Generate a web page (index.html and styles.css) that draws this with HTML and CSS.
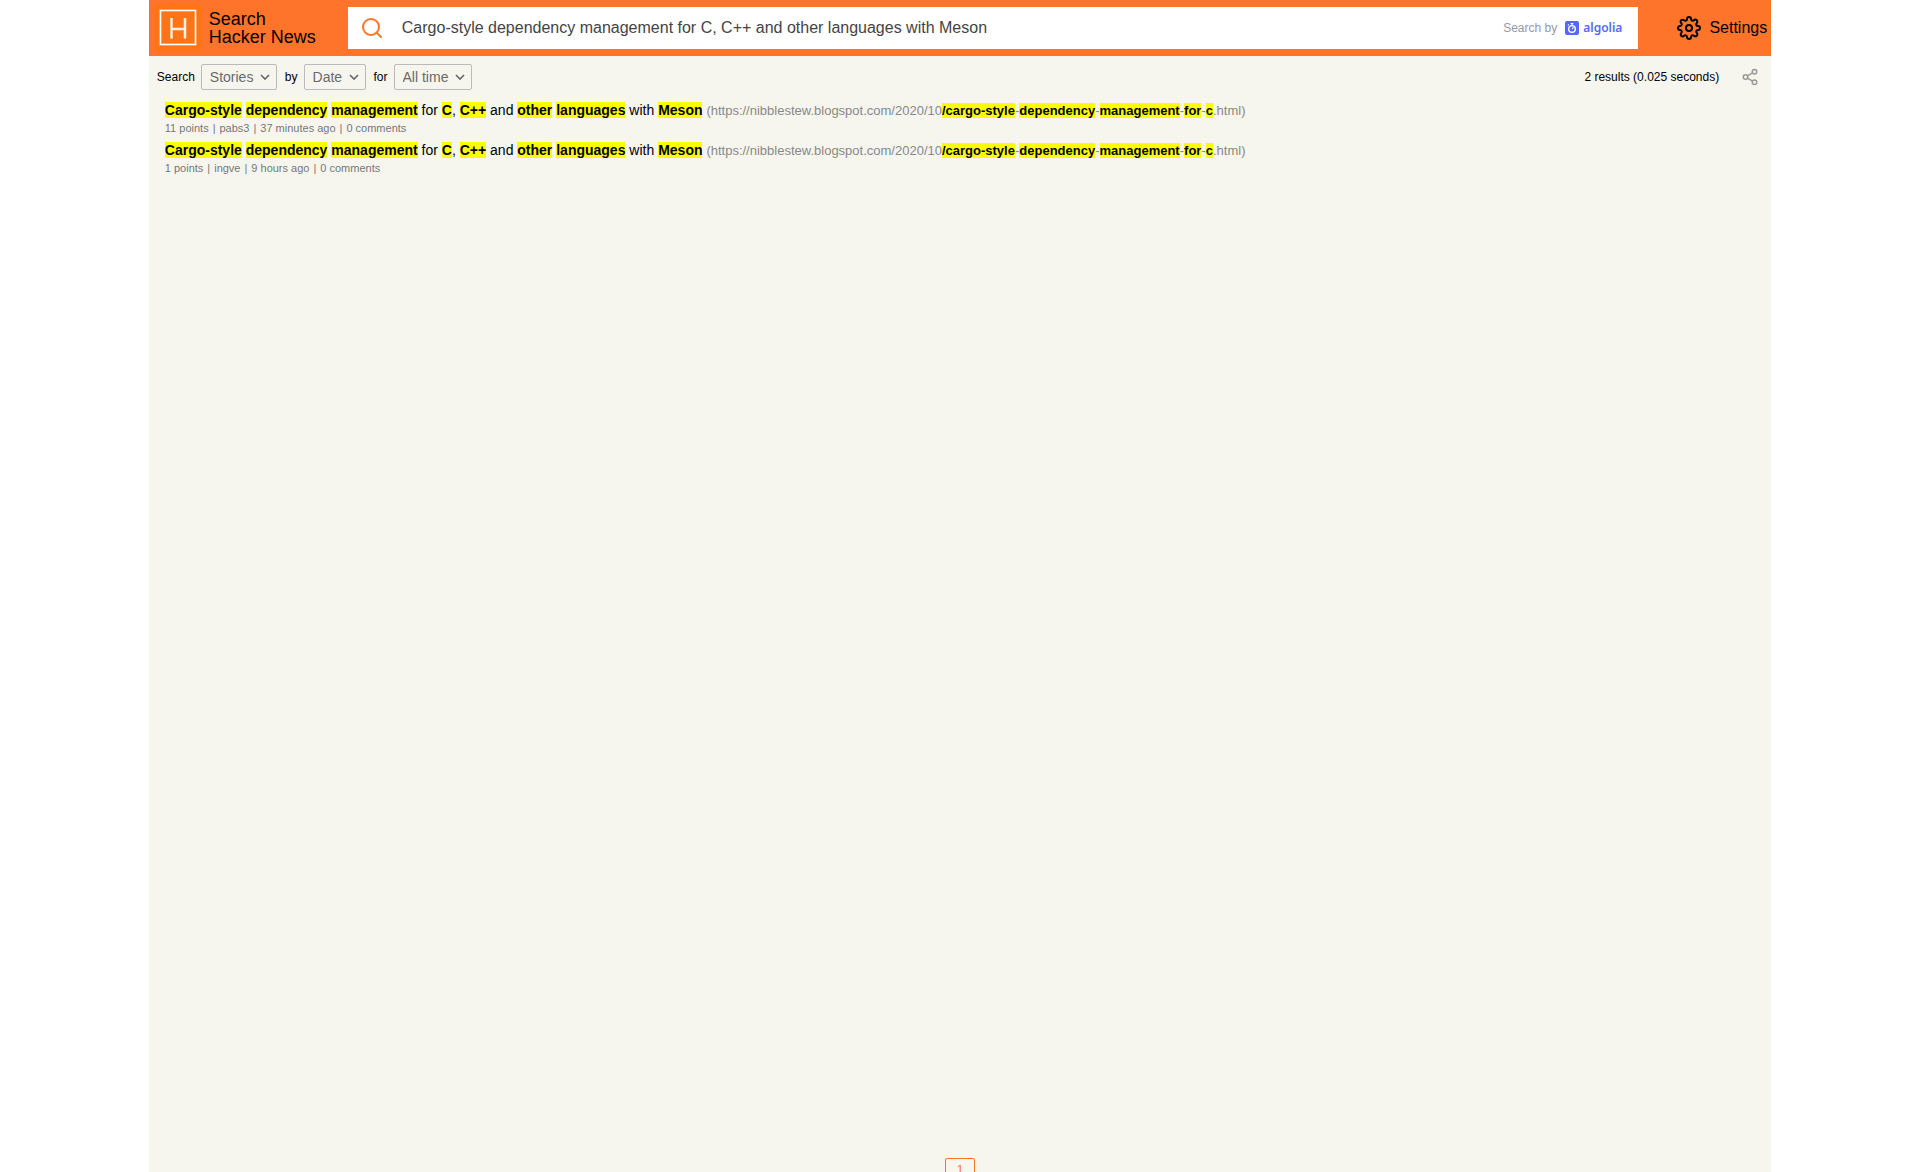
FILE: index.html
```html
<!DOCTYPE html>
<html lang="en">
<head>
<meta charset="utf-8">
<meta name="viewport" content="width=device-width, initial-scale=1">
<title>Search Hacker News</title>
<link rel="stylesheet" href="styles.css">
</head>
<body>
<div class="app">
  <header class="header">
    <a class="brand" href="#">
      <svg class="brand-logo" viewBox="0 0 48 48" aria-hidden="true">
        <rect width="48" height="48" rx="5" fill="#ff7416"/>
        <g fill="none" stroke="#ffb57c" stroke-width="2.400">
          <rect x="6.500" y="6.500" width="35" height="34"/>
          <path d="M17.500 14v20.500M31 14v20.500M17.500 25h13.500" stroke-width="3"/>
        </g>
        <g fill="none" stroke="#fff" stroke-width="1">
          <rect x="6.500" y="6.500" width="35" height="34"/>
          <path d="M17.500 14v20.500M31 14v20.500M17.500 25h13.500" stroke-width="1.600"/>
        </g>
      </svg>
      <span class="brand-name">Search<br>Hacker News</span>
    </a>
    <form class="search" role="search">
      <svg class="search-icon" viewBox="0 0 24 24" aria-hidden="true">
        <circle cx="11" cy="11" r="8"/><path d="M21 21l-4.350-4.350"/>
      </svg>
      <input class="search-input" type="search" aria-label="Search stories" value="Cargo-style dependency management for C, C++ and other languages with Meson">
      <span class="powered">Search by</span>
      <a class="algolia" href="#">
        <svg class="algolia-mark" viewBox="0 0 14 14" aria-hidden="true">
          <rect width="14" height="14" rx="2" fill="#5468ff"/>
          <circle cx="7" cy="7.900" r="3.300" fill="none" stroke="#fff" stroke-width="1.400"/>
          <path d="M5.700 2.500h2.600M7 2.500v2M3 4.300l.8-.8M7 7.900l1.500-1.500" fill="none" stroke="#fff" stroke-width="1.200"/>
        </svg>
        <span>algolia</span>
      </a>
    </form>
    <a class="settings" href="#">
      <svg class="settings-icon" viewBox="0 0 24 24" aria-hidden="true">
        <circle cx="12" cy="12" r="3"/>
        <path d="M19.400 15a1.650 1.650 0 0 0 .33 1.820l.06.06a2 2 0 0 1 0 2.830 2 2 0 0 1-2.830 0l-.06-.06a1.650 1.650 0 0 0-1.820-.33 1.650 1.650 0 0 0-1 1.510V21a2 2 0 0 1-2 2 2 2 0 0 1-2-2v-.09A1.650 1.650 0 0 0 9 19.400a1.650 1.650 0 0 0-1.820.33l-.06.06a2 2 0 0 1-2.830 0 2 2 0 0 1 0-2.830l.06-.06a1.650 1.650 0 0 0 .33-1.820 1.650 1.650 0 0 0-1.510-1H3a2 2 0 0 1-2-2 2 2 0 0 1 2-2h.09A1.650 1.650 0 0 0 4.600 9a1.650 1.650 0 0 0-.33-1.820l-.06-.06a2 2 0 0 1 0-2.830 2 2 0 0 1 2.830 0l.06.06a1.650 1.650 0 0 0 1.820.33H9a1.650 1.650 0 0 0 1-1.510V3a2 2 0 0 1 2-2 2 2 0 0 1 2 2v.09a1.650 1.650 0 0 0 1 1.510 1.650 1.650 0 0 0 1.820-.33l.06-.06a2 2 0 0 1 2.830 0 2 2 0 0 1 0 2.830l-.06.06a1.650 1.650 0 0 0-.33 1.820V9a1.650 1.650 0 0 0 1.510 1H21a2 2 0 0 1 2 2 2 2 0 0 1-2 2h-.09a1.650 1.650 0 0 0-1.510 1z"/>
      </svg>
      <span>Settings</span>
    </a>
  </header>

  <div class="toolbar">
    <div class="filters">
      <label for="type">Search</label>
      <span class="dropdown">
        <select id="type"><option>Stories</option></select>
        <svg class="chevron" viewBox="0 0 24 24" aria-hidden="true"><path d="M6 9l6 6 6-6"/></svg>
      </span>
      <label for="sort">by</label>
      <span class="dropdown">
        <select id="sort"><option>Date</option></select>
        <svg class="chevron" viewBox="0 0 24 24" aria-hidden="true"><path d="M6 9l6 6 6-6"/></svg>
      </span>
      <label for="range">for</label>
      <span class="dropdown">
        <select id="range"><option>All time</option></select>
        <svg class="chevron" viewBox="0 0 24 24" aria-hidden="true"><path d="M6 9l6 6 6-6"/></svg>
      </span>
    </div>
    <span class="stats">2 results (0.025 seconds)</span>
    <button class="share" type="button" aria-label="Share">
      <svg viewBox="0 0 24 24" aria-hidden="true">
        <circle cx="18" cy="5" r="3"/><circle cx="6" cy="12" r="3"/><circle cx="18" cy="19" r="3"/>
        <path d="M8.590 13.510l6.830 3.980M15.410 6.510l-6.820 3.980"/>
      </svg>
    </button>
  </div>

  <main class="results">
    <article class="story">
      <div class="story-title">
        <a class="title" href="#"><mark>Cargo-style</mark> <mark>dependency</mark> <mark>management</mark> for <mark>C</mark>, <mark>C++</mark> and <mark>other</mark> <mark>languages</mark> with <mark>Meson</mark></a>
        <a class="url" href="#">(https://nibblestew.blogspot.com/2020/10<mark>/cargo-style</mark>-<mark>dependency</mark>-<mark>management</mark>-<mark>for</mark>-<mark>c</mark>.html)</a>
      </div>
      <div class="story-meta"><a href="#">11 points</a><span>|</span><a href="#">pabs3</a><span>|</span><a href="#">37 minutes ago</a><span>|</span><a href="#">0 comments</a></div>
    </article>
    <article class="story">
      <div class="story-title">
        <a class="title" href="#"><mark>Cargo-style</mark> <mark>dependency</mark> <mark>management</mark> for <mark>C</mark>, <mark>C++</mark> and <mark>other</mark> <mark>languages</mark> with <mark>Meson</mark></a>
        <a class="url" href="#">(https://nibblestew.blogspot.com/2020/10<mark>/cargo-style</mark>-<mark>dependency</mark>-<mark>management</mark>-<mark>for</mark>-<mark>c</mark>.html)</a>
      </div>
      <div class="story-meta"><a href="#">1 points</a><span>|</span><a href="#">ingve</a><span>|</span><a href="#">9 hours ago</a><span>|</span><a href="#">0 comments</a></div>
    </article>
  </main>

  <nav class="pager" aria-label="Pages">
    <button class="page" type="button" aria-current="page">1</button>
  </nav>
</div>
</body>
</html>
```
FILE: styles.css
```css
* {
  box-sizing: border-box;
}

body {
  margin: 0;
  background: #fff;
  color: #000;
  font: 12px/16px "Liberation Sans", Arial, sans-serif;
}

a {
  color: inherit;
  text-decoration: none;
}

.app {
  display: flex;
  flex-direction: column;
  width: 84.5%;
  min-height: calc(100vh + 24px);
  margin: 0 auto;
  background: #f6f6ef;
}

.header {
  display: flex;
  align-items: center;
  height: 56px;
  padding: 0 4px 0 5px;
  background: #ff742b;
}

.brand {
  display: flex;
  align-items: center;
  gap: 7px;
  width: 194px;
}

.brand-logo {
  width: 48px;
  height: 48px;
}

.brand-name {
  font-size: 18px;
  line-height: 18px;
}

.search {
  display: flex;
  flex: 1;
  align-items: center;
  height: 42px;
  margin-right: 39px;
  padding: 0 16px 0 12px;
  background: #fff;
}

.search-icon {
  width: 24px;
  height: 24px;
  fill: none;
  stroke: #ff742b;
  stroke-width: 2;
  stroke-linecap: round;
}

.search-input {
  flex: 1;
  min-width: 0;
  height: 42px;
  padding: 0 16px 0 18px;
  border: 0;
  outline: 0;
  background: none;
  color: #444;
  font: inherit;
  font-size: 16px;
  appearance: none;
}

.powered {
  margin-right: 8px;
  color: #9698a8;
}

.algolia {
  display: flex;
  align-items: center;
  gap: 4px;
  color: #5468ff;
  font: 600 12px/16px "Noto Sans", sans-serif;
}

.algolia-mark {
  width: 14px;
  height: 14px;
}

.settings {
  display: flex;
  align-items: center;
  gap: 8px;
  font-size: 16px;
}

.settings-icon {
  width: 24px;
  height: 24px;
  fill: none;
  stroke: #000;
  stroke-width: 2;
}

.toolbar {
  display: flex;
  align-items: center;
  height: 42px;
  padding: 0 8px;
}

.filters {
  display: flex;
  flex: 1;
  align-items: center;
  gap: 6px;
}

.dropdown {
  display: grid;
  align-items: center;
  margin-right: 2px;
}

.dropdown select {
  grid-area: 1 / 1;
  height: 26px;
  padding: 0 22px 0 8px;
  border: 1px solid #bbb;
  border-radius: 2px;
  background: none;
  color: #696969;
  font: inherit;
  font-size: 14px;
  appearance: none;
}

.chevron {
  grid-area: 1 / 1;
  justify-self: end;
  width: 16px;
  height: 16px;
  margin-right: 4px;
  fill: none;
  stroke: #696969;
  stroke-width: 2.5;
  pointer-events: none;
}

.stats {
  margin-right: 18px;
}

.share {
  display: flex;
  padding: 0 4px;
  border: 0;
  background: none;
}

.share svg {
  width: 18px;
  height: 18px;
  fill: none;
  stroke: #999;
  stroke-width: 2;
}

.results {
  flex: 1;
  padding: 0 16px;
}

.story {
  padding: 4px 0 3px;
}

.story-title {
  font-size: 14px;
  line-height: 16px;
}

.url {
  color: #888;
  font-size: 13px;
}

mark {
  background: #ff0;
  color: #000;
  font-weight: bold;
}

.story-meta {
  display: flex;
  gap: 4px;
  padding-top: 2px;
  color: #767676;
  font-size: 11px;
  line-height: 14px;
}

.pager {
  display: flex;
  justify-content: center;
  padding-bottom: 14px;
}

.page {
  width: 30px;
  height: 24px;
  padding: 0;
  border: 1px solid #ff742b;
  border-radius: 2px;
  background: none;
  color: #ff742b;
  font: inherit;
}
```
